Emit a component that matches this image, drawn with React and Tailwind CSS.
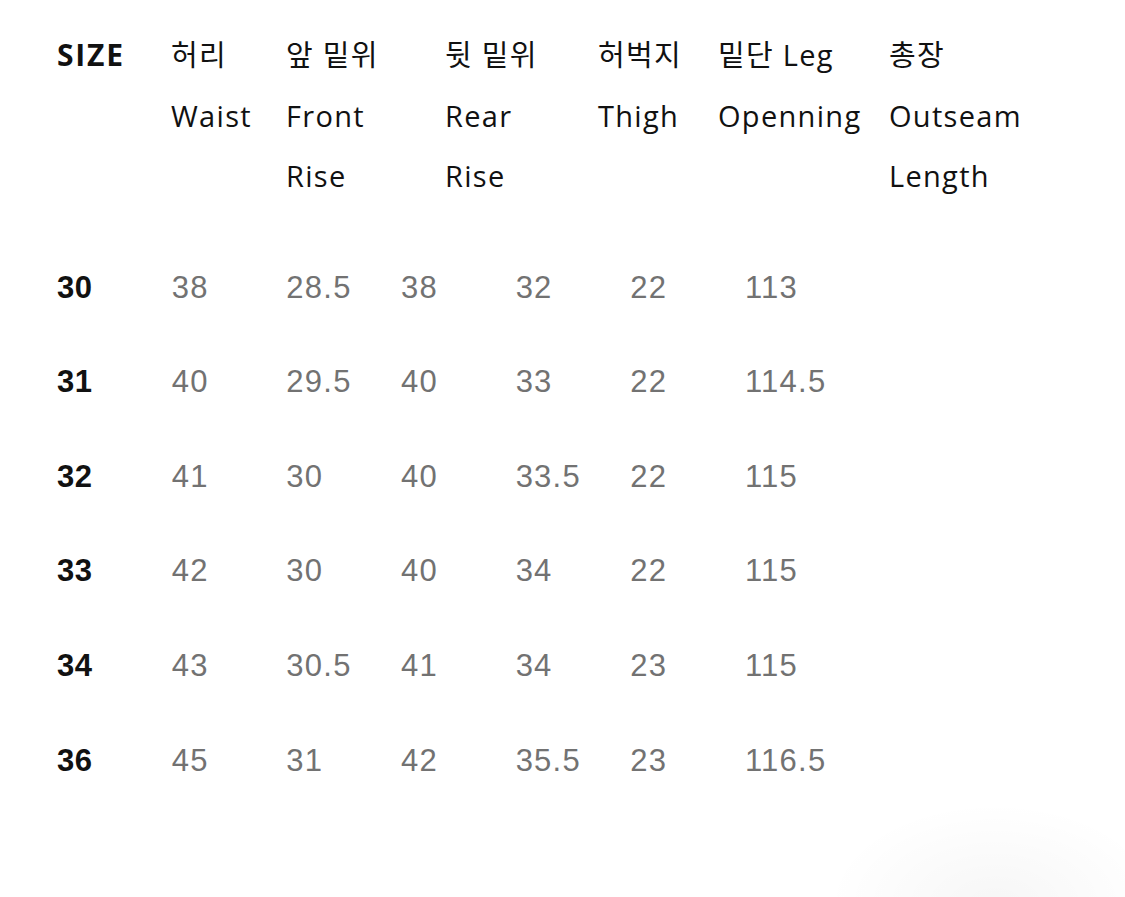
const header = [
  { w: 'w-[114px]', lines: ['SIZE'], bold: true },
  { w: 'w-[115px]', lines: ['허리', 'Waist'] },
  { w: 'w-[159px]', lines: ['앞 밑위', 'Front', 'Rise'] },
  { w: 'w-[153px]', lines: ['뒷 밑위', 'Rear', 'Rise'] },
  { w: 'w-[120px]', lines: ['허벅지', 'Thigh'] },
  { w: 'w-[171px]', lines: ['밑단 Leg', 'Openning'] },
  { w: 'w-[180px]', lines: ['총장', 'Outseam', 'Length'] },
];

const rows = [
  ['30', '38', '28.5', '38', '32', '22', '113'],
  ['31', '40', '29.5', '40', '33', '22', '114.5'],
  ['32', '41', '30', '40', '33.5', '22', '115'],
  ['33', '42', '30', '40', '34', '22', '115'],
  ['34', '43', '30.5', '41', '34', '23', '115'],
  ['36', '45', '31', '42', '35.5', '23', '116.5'],
];

export default function App() {
  return (
    <div className="relative h-[897px] w-[1125px] overflow-hidden bg-white">
      <div
        className="absolute -bottom-28 -right-10 h-52 w-[340px] rounded-full bg-[radial-gradient(ellipse_at_center,rgba(0,0,0,0.035),transparent_70%)]"
        aria-hidden="true"
      />
      <div className="relative px-[57px] pt-[25px]">
        <div className="flex items-start font-['Open_Sans','Noto_Sans_CJK_KR',sans-serif] text-[29px] leading-[60.5px] tracking-[0.045em] text-[#111]">
          {header.map((col, i) => (
            <div
              key={i}
              className={`${col.w} shrink-0 ${col.bold ? 'text-[30px] font-bold tracking-[0.06em]' : 'font-normal'}`}
            >
              {col.lines.map((line) => (
                <div key={line} className="whitespace-nowrap">
                  {line}
                </div>
              ))}
            </div>
          ))}
        </div>

        <div className="mt-[34px] font-['Liberation_Sans',Arial,sans-serif] text-[31px] tracking-[0.04em]">
          {rows.map((row) => (
            <div key={row[0]} className="flex h-[94.6px] items-center">
              {row.map((cell, j) => (
                <div
                  key={j}
                  className={`w-[114.67px] shrink-0 ${j === 0 ? 'font-bold tracking-[0.02em] text-[#111]' : 'text-[#727272]'}`}
                >
                  {cell}
                </div>
              ))}
            </div>
          ))}
        </div>
      </div>
    </div>
  );
}
